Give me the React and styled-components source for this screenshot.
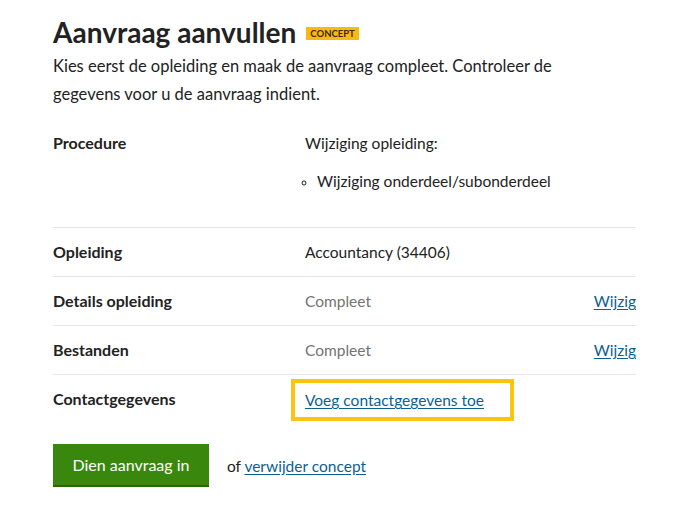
import React from 'react'
import styled, { createGlobalStyle } from 'styled-components'

const GlobalStyle = createGlobalStyle`
    body {
        margin: 0;
        background: #fff;
        font-family: Lato, "Open Sans", sans-serif;
        color: #222;
    }
`;

const Page = styled.div`
    width: 583px;
    padding: 12px 0 20px 53px;
`;

const TitleRow = styled.div`
    display: flex;
    align-items: center;
    gap: 10px;
`;

const Title = styled.h1`
    margin: 0;
    font-size: 28px;
    line-height: 40px;
    font-weight: 700;
    color: #222;
`;

const Badge = styled.span`
    display: inline-block;
    background: #f9b914;
    color: #3a2a00;
    font-size: 9.5px;
    font-weight: 700;
    line-height: 13px;
    padding: 0 4px;
    margin-top: 3px;
`;

const Intro = styled.p`
    margin: 0;
    max-width: 560px;
    font-size: 16.5px;
    line-height: 28px;
`;

const Table = styled.div`
    margin-top: 11px;
`;

const Row = styled.div`
    display: grid;
    grid-template-columns: 252px 1fr auto;
    padding: 12px 0 ${({ $bottom }) => $bottom || 12}px;
    border-bottom: ${({ $last }) => ($last ? 'none' : '1px solid #e6e6e6')};
    font-size: 16px;
    line-height: 24px;
`;

const Label = styled.div`
    font-weight: 700;
`;

const Value = styled.div`
    font-size: 15.5px;
    color: ${({ $muted }) => ($muted ? '#737373' : '#222')};
`;

const Line = styled.p`
    margin: 0 0 14px;
`;

const List = styled.ul`
    margin: 0;
    padding-left: 12px;
    list-style: circle;

    li::marker {
        font-size: 12px;
    }
`;

const Link = styled.a`
    color: #0b5f93;
    font-size: 15.5px;
    text-decoration: underline;
    text-underline-offset: 2px;
`;

const Highlight = styled.span`
    display: inline-block;
    width: 223px;
    margin: -8px 0 0 -14px;
    padding: 5px 0 5px 10px;
    border: 4px solid #fcc40f;
    box-sizing: border-box;
`;

const Actions = styled.div`
    display: flex;
    align-items: center;
    gap: 18px;
    margin-top: 11px;
    font-size: 15.5px;
`;

const Button = styled.button`
    background: #39870c;
    color: #fff;
    border: none;
    border-bottom: 2px solid #2a6608;
    font-family: inherit;
    font-size: 16px;
    height: 43px;
    width: 156px;
    padding: 0;
`;

const App = () => (
    <>
        <GlobalStyle />
        <Page>
            <TitleRow>
                <Title>Aanvraag aanvullen</Title>
                <Badge>CONCEPT</Badge>
            </TitleRow>
            <Intro>
                Kies eerst de opleiding en maak de aanvraag compleet. Controleer de
                gegevens voor u de aanvraag indient.
            </Intro>
            <Table>
                <Row $bottom={34}>
                    <Label>Procedure</Label>
                    <Value>
                        <Line>Wijziging opleiding:</Line>
                        <List>
                            <li>Wijziging onderdeel/subonderdeel</li>
                        </List>
                    </Value>
                </Row>
                <Row>
                    <Label>Opleiding</Label>
                    <Value>Accountancy (34406)</Value>
                </Row>
                <Row>
                    <Label>Details opleiding</Label>
                    <Value $muted>Compleet</Value>
                    <Link href="#">Wijzig</Link>
                </Row>
                <Row>
                    <Label>Bestanden</Label>
                    <Value $muted>Compleet</Value>
                    <Link href="#">Wijzig</Link>
                </Row>
                <Row $last>
                    <Label>Contactgegevens</Label>
                    <Value>
                        <Highlight>
                            <Link href="#">Voeg contactgegevens toe</Link>
                        </Highlight>
                    </Value>
                </Row>
            </Table>
            <Actions>
                <Button>Dien aanvraag in</Button>
                <span>
                    of <Link href="#">verwijder concept</Link>
                </span>
            </Actions>
        </Page>
    </>
)

export default App
